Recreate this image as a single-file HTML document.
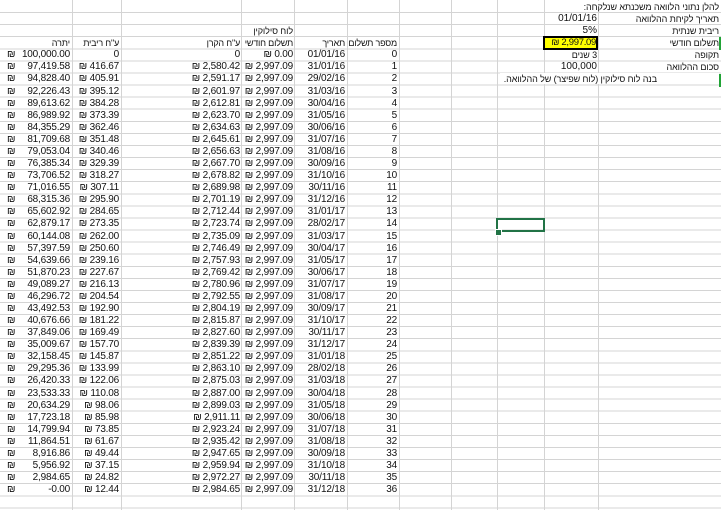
<!DOCTYPE html>
<html><head><meta charset="utf-8"><style>
html,body{margin:0;padding:0}
body{width:721px;height:510px;overflow:hidden;position:relative;background:#fff;font-family:"Liberation Sans",Arial,sans-serif;font-size:10px;color:#111;
background-image:
linear-gradient(to right,transparent 72px,#d4d4d4 72px 73px,transparent 73px 121px,#d4d4d4 121px 122px,transparent 122px 241px,#d4d4d4 241px 242px,transparent 242px 294px,#d4d4d4 294px 295px,transparent 295px 347px,#d4d4d4 347px 348px,transparent 348px 399px,#d4d4d4 399px 400px,transparent 400px 451px,#d4d4d4 451px 452px,transparent 452px 497px,#d4d4d4 497px 498px,transparent 498px 544px,#d4d4d4 544px 545px,transparent 545px 598px,#d4d4d4 598px 599px,transparent 599px),
repeating-linear-gradient(to bottom,transparent 0 11.08px,#d4d4d4 11.08px 12.08px);
background-position:0 0,0 1px;}
.r{position:absolute;left:0;width:721px;height:12px;line-height:12px;top:calc(1px + var(--i)*12.08px)}
.r i{position:absolute;top:0;font-style:normal;text-align:right;white-space:nowrap;direction:ltr;letter-spacing:-0.2px}
.r i:nth-child(1){left:348px;width:49px}
.r i:nth-child(2){left:295px;width:50px}
.r i:nth-child(3){left:242px;width:51px}
.r i:nth-child(4){left:122px;width:118px}
.r i:nth-child(5){left:73px;width:46px}
.r i:nth-child(6){left:0;width:70px}
.r i:nth-child(6)::before{content:"₪";position:absolute;left:7px}
.he{font-size:9px;letter-spacing:-0.1px}
.t{position:absolute;height:12px;line-height:12px;white-space:nowrap;direction:rtl;text-align:right;top:calc(1px + var(--i)*12.08px)}
</style></head><body>
<div class="t he" style="--i:0;left:545px;width:174px;background:#fff;height:11px">להלן נתוני הלוואה משכנתא שנלקחה:</div>
<div class="t he" style="--i:1;left:599px;width:120px">תאריך לקיחת ההלוואה</div>
<div class="t" style="--i:1;left:545px;width:52px;direction:ltr">01/01/16</div>
<div class="t he" style="--i:2;left:599px;width:120px">ריבית שנתית</div>
<div class="t" style="--i:2;left:545px;width:52px;direction:ltr">5%</div>
<div class="t he" style="--i:3;left:599px;width:120px">תשלום חודשי</div>
<div style="position:absolute;left:543px;top:36px;width:51px;height:10px;border:2px solid #000;background:#ffff00;line-height:10px;text-align:right;direction:ltr;font-size:9.5px;letter-spacing:-0.3px;white-space:nowrap;overflow:hidden">₪ 2,997.09</div>
<div class="t he" style="--i:4;left:599px;width:120px">תקופה</div>
<div class="t he" style="--i:4;left:545px;width:52px">3 שנים</div>
<div class="t he" style="--i:5;left:599px;width:120px">סכום ההלוואה</div>
<div class="t" style="--i:5;left:545px;width:52px;direction:ltr">100,000</div>
<div class="t he" style="--i:6;left:500px;width:219px;height:11px;background:#fff"><span style="position:absolute;right:62px">בנה לוח סילוקין (לוח שפיצר) של ההלוואה.</span></div>
<div style="position:absolute;left:719px;top:37px;width:2px;height:13px;background:#21a336"></div>
<div style="position:absolute;left:719px;top:74px;width:2px;height:13px;background:#21a336"></div>
<div class="t he" style="--i:2;left:242px;width:51px">לוח סילוקין</div>
<div class="r he" style="--i:3"><i style="direction:rtl">מספר תשלום</i><i style="direction:rtl">תאריך</i><i style="direction:rtl">תשלום חודשי</i><i style="direction:rtl">ע"ח הקרן</i><i style="direction:rtl">ע"ח ריבית</i><span style="position:absolute;left:0;width:70px;text-align:right;direction:rtl">יתרה</span></div>
<div class="r" style="--i:4"><i>0</i><i>01/01/16</i><i>₪ 0.00</i><i>0</i><i>0</i><i>100,000.00</i></div>
<div class="r" style="--i:5"><i>1</i><i>31/01/16</i><i>₪ 2,997.09</i><i>₪ 2,580.42</i><i>₪ 416.67</i><i>97,419.58</i></div>
<div class="r" style="--i:6"><i>2</i><i>29/02/16</i><i>₪ 2,997.09</i><i>₪ 2,591.17</i><i>₪ 405.91</i><i>94,828.40</i></div>
<div class="r" style="--i:7"><i>3</i><i>31/03/16</i><i>₪ 2,997.09</i><i>₪ 2,601.97</i><i>₪ 395.12</i><i>92,226.43</i></div>
<div class="r" style="--i:8"><i>4</i><i>30/04/16</i><i>₪ 2,997.09</i><i>₪ 2,612.81</i><i>₪ 384.28</i><i>89,613.62</i></div>
<div class="r" style="--i:9"><i>5</i><i>31/05/16</i><i>₪ 2,997.09</i><i>₪ 2,623.70</i><i>₪ 373.39</i><i>86,989.92</i></div>
<div class="r" style="--i:10"><i>6</i><i>30/06/16</i><i>₪ 2,997.09</i><i>₪ 2,634.63</i><i>₪ 362.46</i><i>84,355.29</i></div>
<div class="r" style="--i:11"><i>7</i><i>31/07/16</i><i>₪ 2,997.09</i><i>₪ 2,645.61</i><i>₪ 351.48</i><i>81,709.68</i></div>
<div class="r" style="--i:12"><i>8</i><i>31/08/16</i><i>₪ 2,997.09</i><i>₪ 2,656.63</i><i>₪ 340.46</i><i>79,053.04</i></div>
<div class="r" style="--i:13"><i>9</i><i>30/09/16</i><i>₪ 2,997.09</i><i>₪ 2,667.70</i><i>₪ 329.39</i><i>76,385.34</i></div>
<div class="r" style="--i:14"><i>10</i><i>31/10/16</i><i>₪ 2,997.09</i><i>₪ 2,678.82</i><i>₪ 318.27</i><i>73,706.52</i></div>
<div class="r" style="--i:15"><i>11</i><i>30/11/16</i><i>₪ 2,997.09</i><i>₪ 2,689.98</i><i>₪ 307.11</i><i>71,016.55</i></div>
<div class="r" style="--i:16"><i>12</i><i>31/12/16</i><i>₪ 2,997.09</i><i>₪ 2,701.19</i><i>₪ 295.90</i><i>68,315.36</i></div>
<div class="r" style="--i:17"><i>13</i><i>31/01/17</i><i>₪ 2,997.09</i><i>₪ 2,712.44</i><i>₪ 284.65</i><i>65,602.92</i></div>
<div class="r" style="--i:18"><i>14</i><i>28/02/17</i><i>₪ 2,997.09</i><i>₪ 2,723.74</i><i>₪ 273.35</i><i>62,879.17</i></div>
<div class="r" style="--i:19"><i>15</i><i>31/03/17</i><i>₪ 2,997.09</i><i>₪ 2,735.09</i><i>₪ 262.00</i><i>60,144.08</i></div>
<div class="r" style="--i:20"><i>16</i><i>30/04/17</i><i>₪ 2,997.09</i><i>₪ 2,746.49</i><i>₪ 250.60</i><i>57,397.59</i></div>
<div class="r" style="--i:21"><i>17</i><i>31/05/17</i><i>₪ 2,997.09</i><i>₪ 2,757.93</i><i>₪ 239.16</i><i>54,639.66</i></div>
<div class="r" style="--i:22"><i>18</i><i>30/06/17</i><i>₪ 2,997.09</i><i>₪ 2,769.42</i><i>₪ 227.67</i><i>51,870.23</i></div>
<div class="r" style="--i:23"><i>19</i><i>31/07/17</i><i>₪ 2,997.09</i><i>₪ 2,780.96</i><i>₪ 216.13</i><i>49,089.27</i></div>
<div class="r" style="--i:24"><i>20</i><i>31/08/17</i><i>₪ 2,997.09</i><i>₪ 2,792.55</i><i>₪ 204.54</i><i>46,296.72</i></div>
<div class="r" style="--i:25"><i>21</i><i>30/09/17</i><i>₪ 2,997.09</i><i>₪ 2,804.19</i><i>₪ 192.90</i><i>43,492.53</i></div>
<div class="r" style="--i:26"><i>22</i><i>31/10/17</i><i>₪ 2,997.09</i><i>₪ 2,815.87</i><i>₪ 181.22</i><i>40,676.66</i></div>
<div class="r" style="--i:27"><i>23</i><i>30/11/17</i><i>₪ 2,997.09</i><i>₪ 2,827.60</i><i>₪ 169.49</i><i>37,849.06</i></div>
<div class="r" style="--i:28"><i>24</i><i>31/12/17</i><i>₪ 2,997.09</i><i>₪ 2,839.39</i><i>₪ 157.70</i><i>35,009.67</i></div>
<div class="r" style="--i:29"><i>25</i><i>31/01/18</i><i>₪ 2,997.09</i><i>₪ 2,851.22</i><i>₪ 145.87</i><i>32,158.45</i></div>
<div class="r" style="--i:30"><i>26</i><i>28/02/18</i><i>₪ 2,997.09</i><i>₪ 2,863.10</i><i>₪ 133.99</i><i>29,295.36</i></div>
<div class="r" style="--i:31"><i>27</i><i>31/03/18</i><i>₪ 2,997.09</i><i>₪ 2,875.03</i><i>₪ 122.06</i><i>26,420.33</i></div>
<div class="r" style="--i:32"><i>28</i><i>30/04/18</i><i>₪ 2,997.09</i><i>₪ 2,887.00</i><i>₪ 110.08</i><i>23,533.33</i></div>
<div class="r" style="--i:33"><i>29</i><i>31/05/18</i><i>₪ 2,997.09</i><i>₪ 2,899.03</i><i>₪ 98.06</i><i>20,634.29</i></div>
<div class="r" style="--i:34"><i>30</i><i>30/06/18</i><i>₪ 2,997.09</i><i>₪ 2,911.11</i><i>₪ 85.98</i><i>17,723.18</i></div>
<div class="r" style="--i:35"><i>31</i><i>31/07/18</i><i>₪ 2,997.09</i><i>₪ 2,923.24</i><i>₪ 73.85</i><i>14,799.94</i></div>
<div class="r" style="--i:36"><i>32</i><i>31/08/18</i><i>₪ 2,997.09</i><i>₪ 2,935.42</i><i>₪ 61.67</i><i>11,864.51</i></div>
<div class="r" style="--i:37"><i>33</i><i>30/09/18</i><i>₪ 2,997.09</i><i>₪ 2,947.65</i><i>₪ 49.44</i><i>8,916.86</i></div>
<div class="r" style="--i:38"><i>34</i><i>31/10/18</i><i>₪ 2,997.09</i><i>₪ 2,959.94</i><i>₪ 37.15</i><i>5,956.92</i></div>
<div class="r" style="--i:39"><i>35</i><i>30/11/18</i><i>₪ 2,997.09</i><i>₪ 2,972.27</i><i>₪ 24.82</i><i>2,984.65</i></div>
<div class="r" style="--i:40"><i>36</i><i>31/12/18</i><i>₪ 2,997.09</i><i>₪ 2,984.65</i><i>₪ 12.44</i><i>-0.00</i></div>
<div style="position:absolute;left:496px;top:218px;width:45px;height:10px;border:2px solid #217346"></div>
<div style="position:absolute;left:495px;top:229px;width:5px;height:5px;background:#217346;border:1px solid #fff"></div>
</body></html>
